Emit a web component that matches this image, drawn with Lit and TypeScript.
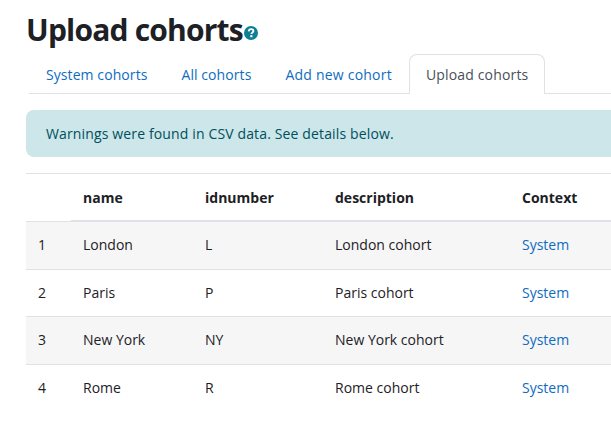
import { LitElement, html, css } from "lit";
import { customElement } from "lit/decorators.js";

const rows = [
  ["1", "London", "L", "London cohort"],
  ["2", "Paris", "P", "Paris cohort"],
  ["3", "New York", "NY", "New York cohort"],
  ["4", "Rome", "R", "Rome cohort"],
];

@customElement("app-root")
export class AppRoot extends LitElement {
  static styles = css`
    :host { display: block; width: 611px; height: 423px; overflow: hidden; background: #fff; font-family: "Open Sans", sans-serif; font-size: 14px; color: #1d2125; }
    .page { width: 640px; padding: 9px 0 0 26px; box-sizing: border-box; }
    h1 { margin: 0; font-size: 30px; line-height: 42px; font-weight: 700; display: flex; align-items: center; letter-spacing: -0.8px; }
    .help { margin: 5px 0 0 1px; display: block; }
    .tabs { display: flex; margin: 3px 0 0 3px; padding-left: 0; border-bottom: 1px solid #dee2e6; height: 39px; width: 640px; }
    .tab { box-sizing: border-box; height: 40px; padding: 10px 16px 0 16px; color: #0f6cbf; line-height: 20px; border: 1px solid transparent; border-bottom: 0; border-radius: 8px 8px 0 0; white-space: nowrap; letter-spacing: 0.08px; }
    .tab.wide { letter-spacing: 0.22px; }
    .tab.active { color: #495057; background: #fff; border-color: #dee2e6; letter-spacing: 0.16px; }
    .alert { box-sizing: border-box; height: 47px; margin-top: 16px; padding: 14px 20px; line-height: 20px; background: #cce6ea; color: #004f5c; border-radius: 8px 0 0 8px; width: 640px; letter-spacing: 0.14px; }
    table { margin-top: 16px; border-collapse: collapse; table-layout: fixed; width: 640px; border-top: 1px solid #dee2e6; }
    th, td { padding: 0 12px; text-align: left; line-height: 20px; }
    th { height: 44px; padding-top: 2px; font-weight: 700; border-bottom: 2px solid #dee2e6; }
    th:first-child { border-bottom-width: 1px; }
    td { height: 46.5px; border-bottom: 1px solid #dee2e6; }
    tr:nth-child(odd) td { background: #f6f6f7; }
    tr:last-child td { border-bottom: 0; }
    a { color: #0f6cbf; text-decoration: none; }
  `;

  render() {
    return html`
      <div class="page">
        <h1>Upload cohorts<svg class="help" width="14" height="14" viewBox="0 0 14 14"><circle cx="7" cy="7" r="7" fill="#0f7f93"/><path d="M4.7 5.4C4.8 4 5.8 3.2 7.1 3.2 8.5 3.2 9.4 4 9.4 5.1 9.4 6.6 7.4 6.6 7.4 8.1" fill="none" stroke="#fff" stroke-width="1.8"/><rect x="6.3" y="9.2" width="2.1" height="2" fill="#fff"/></svg></h1>
        <div class="tabs">
          <span class="tab">System cohorts</span>
          <span class="tab">All cohorts</span>
          <span class="tab wide">Add new cohort</span>
          <span class="tab active">Upload cohorts</span>
        </div>
        <div class="alert">Warnings were found in CSV data. See details below.</div>
        <table>
          <colgroup><col style="width:45px"><col style="width:122px"><col style="width:130px"><col style="width:187px"><col></colgroup>
          <thead><tr><th></th><th>name</th><th>idnumber</th><th>description</th><th>Context</th></tr></thead>
          <tbody>
            ${rows.map((r) => html`<tr><td>${r[0]}</td><td>${r[1]}</td><td>${r[2]}</td><td>${r[3]}</td><td><a href="#">System</a></td></tr>`)}
          </tbody>
        </table>
      </div>
    `;
  }
}
